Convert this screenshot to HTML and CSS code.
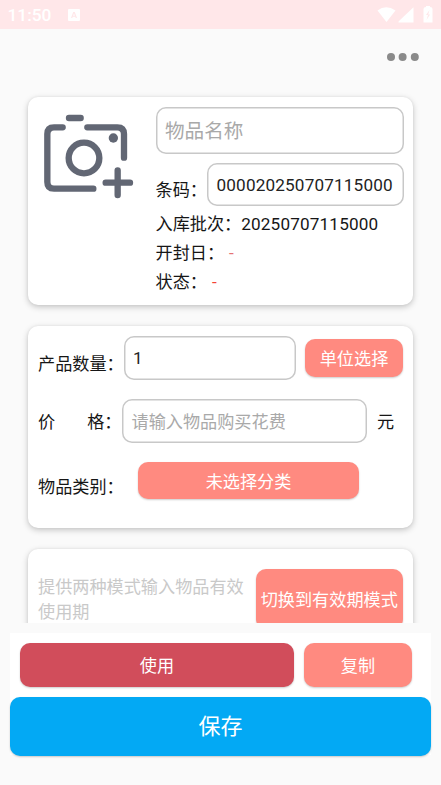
FILE: index.html
```html
<!DOCTYPE html>
<html lang="zh-CN">
<head>
<meta charset="utf-8">
<title>物品</title>
<link rel="stylesheet" href="styles.css">
</head>
<body>
<header class="status">
  <span class="clock">11:50</span>
  <svg class="ime" viewBox="0 0 12 12"><path fill="#fff" fill-rule="evenodd" d="M1 0H11Q12 0 12 1V11Q12 12 11 12H1Q0 12 0 11V1Q0 0 1 0ZM5.2 3L3 9H4.3L4.7 7.8H7.3L7.7 9H9L6.8 3ZM6 4.3L6.9 6.8H5.1Z"/></svg>
  <svg class="signals" viewBox="0 0 56 18"><g fill="#fff"><path d="M0.5 4.5Q9 -2.2 18.5 4.5L9.5 16Z"/><path d="M36.5 1.2V16.5H22.5Q20.5 16.5 22 15Z"/><path fill-rule="evenodd" d="M49 1V0H53V1Q55.5 1 55.5 3V16.5H46.500V3Q46.500 1 49 1ZM52.500 4L49 9H51L49.500 14L53 8.500H51.200Z"/></g></svg>
</header>
<nav class="toolbar"><svg class="more" viewBox="0 0 32 8"><g fill="#8a8a8a"><circle cx="4" cy="4" r="4"/><circle cx="15.600" cy="4" r="4"/><circle cx="27.800" cy="4" r="4"/></g></svg></nav>
<main class="scroll">
  <section class="card item">
    <svg class="camera" viewBox="70 70 270 260" fill="none" stroke="#626774" stroke-width="19" stroke-linecap="round" stroke-linejoin="round">
      <path d="M145 85H180M126 113H100Q80 113 80 133V277Q80 297 100 297H218M200 113H290Q310 113 310 133V204M291 242V316M255 279H328"/>
      <circle cx="190" cy="205" r="46"/>
      <circle cx="278" cy="145" r="14" fill="#626774" stroke="none"/>
    </svg>
    <div class="details">
      <div class="field name hint">物品名称</div>
      <div class="code-row"><span class="code-label">条码：</span><div class="field code">000020250707115000</div></div>
      <div class="line">入库批次：<span class="batch">20250707115000</span></div>
      <div class="line">开封日：<span class="dash soft">-</span></div>
      <div class="line">状态：<span class="dash state">-</span></div>
    </div>
  </section>
  <section class="card stock">
    <div class="row amount"><span class="label">产品数量：</span><div class="field quantity">1</div><div class="button unit">单位选择</div></div>
    <div class="row cost"><span class="label split"><span>价</span><span>格：</span></span><div class="field price hint">请输入物品购买花费</div><span class="currency">元</span></div>
    <div class="row kind"><span class="label">物品类别：</span><div class="button category">未选择分类</div></div>
  </section>
  <section class="card expiry">
    <p class="note">提供两种模式输入物品有效使用期</p>
    <div class="button mode">切换到有效期模式</div>
  </section>
</main>
<footer class="actions">
  <div class="pair"><div class="button use">使用</div><div class="button copy">复制</div></div>
  <div class="button save">保存</div>
</footer>
</body>
</html>
```
FILE: styles.css
```css
* { box-sizing: border-box; }
body {
  margin: 0;
  height: 785px;
  overflow: hidden;
  background: #fafafa;
  color: #161616;
  font: 17.15px/25px Roboto, "Noto Sans CJK SC", sans-serif;
  white-space: nowrap;
}
.status {
  display: flex;
  align-items: center;
  height: 29px;
  padding: 2px 8px 0 7.5px;
  background: #ffe7e9;
  color: #fff;
}
.clock { width: 60.5px; font-size: 17.3px; font-weight: 500; }
.ime { width: 12px; height: 12px; margin-top: -2px; }
.signals { width: 56px; height: 18px; margin: -1px 0 0 auto; }
.toolbar { display: flex; justify-content: flex-end; height: 57px; padding: 24.5px 22px 0 0; }
.more { width: 32px; height: 8px; margin-top: -.5px; }
.scroll { height: 537px; padding: 10.5px 28px 0; overflow: hidden; }
.card {
  border-radius: 10px;
  background: #fff;
  box-shadow: 0 2px 6px rgba(0, 0, 0, .22), 0 0 3px rgba(0, 0, 0, .05);
}
.item { display: flex; height: 208.5px; padding: 10px 9.5px 0 15.5px; }
.camera { width: 90px; height: 86.7px; margin-top: 6.8px; }
.details { flex: 1; margin-left: 22px; }
.field {
  display: flex;
  align-items: center;
  height: 43.5px;
  padding: 2px 0 0 9.5px;
  border-radius: 10px;
  box-shadow: inset 0 0 0 1.5px #c8c8c8;
  color: #222;
}
.name { height: 47px; font-size: 19.6px; }
.field.hint { color: #a9a9a9; }
.code-row { display: flex; align-items: center; height: 43.5px; margin: 9px 0 4px; }
.code-label { width: 51.5px; padding-top: 13px; }
.code { flex: 1; letter-spacing: .16px; }
.line { height: 29px; line-height: 29px; }
.batch { letter-spacing: .16px; }
.dash { margin-left: 5px; color: #f44336; }
.dash.soft { color: #e57373; }
.stock { height: 202px; margin-top: 21px; padding: 10px 10px 0; }
.row { display: flex; align-items: center; }
.amount { height: 43.5px; }
.label { width: 85.5px; padding-top: 13px; }
.quantity { width: 172.5px; }
.button {
  display: flex;
  align-items: center;
  justify-content: center;
  padding-top: 2px;
  border-radius: 10px;
  background: #ff8a80;
  box-shadow: 0 1px 2px rgba(0, 0, 0, .2);
  color: #fff;
}
.unit { width: 98px; height: 37.5px; margin-left: auto; padding-top: 3px; }
.cost { height: 43.5px; margin-top: 19.5px; }
.split { display: flex; gap: 32px; width: 84px; padding-top: 4px; }
.price { width: 245px; padding-top: 4px; }
.currency { margin-left: 10px; padding-top: 4px; }
.kind { height: 37px; margin-top: 19.5px; }
.kind .label { width: 100px; }
.category { width: 221px; height: 37px; padding-top: 4px; }
.expiry { display: flex; height: 112px; margin-top: 21px; padding: 20px 10px 0; }
.note { width: 210px; margin: 6px 0 0; color: #c9c9c9; white-space: normal; }
.mode { width: 147.5px; height: 60px; margin-left: auto; }
.actions { height: 122px; margin: 10px 10px 0; background: #fff; }
.pair { display: flex; gap: 10px; height: 64px; padding: 10px 19px 10px 10px; }
.use { flex: 1; background: #d14d5b; }
.copy { width: 108px; }
.save { height: 58.5px; padding-top: 0; background: #03a9f4; font-size: 22px; }
```
